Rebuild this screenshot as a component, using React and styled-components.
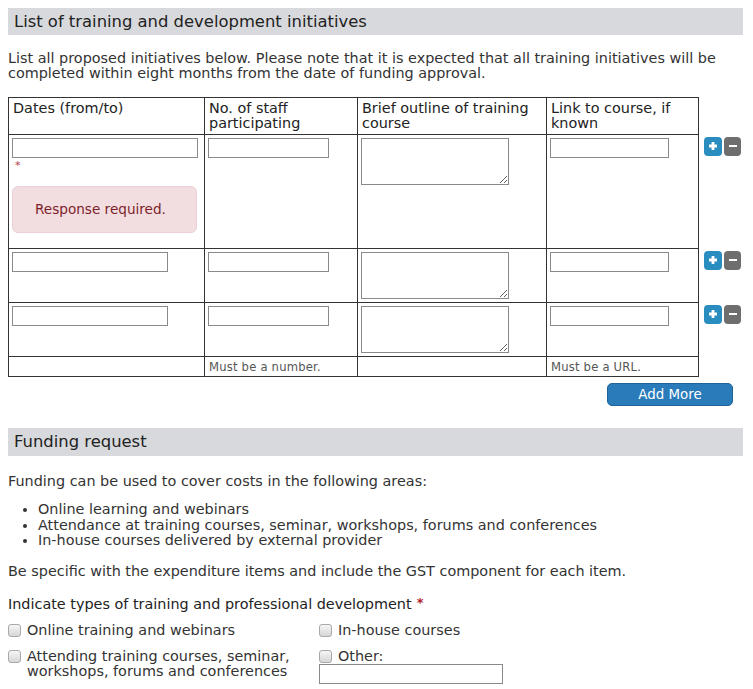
import React from "react";
import styled, { createGlobalStyle } from "styled-components";

const GlobalStyle = createGlobalStyle`
  body {
    margin: 8px;
    background: #ffffff;
    color: #333333;
    font-family: "DejaVu Sans", "Liberation Sans", sans-serif;
    font-size: 14.4px;
    line-height: 15px;
  }
`;

const Page = styled.div`
  width: 735px;
  display: flex;
  flex-direction: column;
`;

const SectionHeader = styled.h2`
  margin: 0;
  height: ${(p) => p.$h}px;
  display: flex;
  align-items: center;
  padding: 0 6px;
  background: #d8d9dc;
  color: #222222;
  font-size: 16.4px;
  font-weight: normal;
  line-height: 20px;
`;

const Para = styled.p`
  margin: ${(p) => p.$mt}px 0 0 0;
  line-height: 15px;
`;

const Table = styled.table`
  margin-top: 16px;
  border-collapse: collapse;
  table-layout: fixed;
  width: 735px;
`;

const HeadCell = styled.th`
  border: 1px solid #333333;
  padding: 3px 4px 3px 4px;
  text-align: left;
  vertical-align: top;
  font-weight: normal;
  color: #222222;
  line-height: 15px;
`;

const Cell = styled.td`
  border: 1px solid #333333;
  padding: 3px 4px 3px 3px;
  vertical-align: top;
`;

const NoteCell = styled.td`
  border: 1px solid #333333;
  padding: 3px 4px 2px 4px;
  font-size: 11.6px;
  line-height: 14px;
  color: #555555;
  letter-spacing: 0.2px;
`;

const SideCell = styled.td`
  border: none;
  padding: 2px 0 0 5px;
  vertical-align: top;
`;

const EmptySide = styled.th`
  border: none;
  padding: 0;
`;

const TextInput = styled.input`
  display: block;
  box-sizing: border-box;
  width: ${(p) => p.$w}px;
  height: 20px;
  margin: 0;
  border: 1px solid #8a8a8a;
  border-radius: 0;
  padding: 0 3px;
  background: #ffffff;
  font: inherit;
`;

const TextArea = styled.textarea`
  display: block;
  box-sizing: border-box;
  width: 148px;
  height: 47px;
  margin: 0;
  border: 1px solid #8a8a8a;
  border-radius: 0;
  padding: 2px;
  font: inherit;
`;

const Required = styled.div`
  height: 15px;
  padding-left: 3px;
  color: #b03a48;
  font-size: 11px;
  line-height: 15px;
`;

const ErrorBox = styled.div`
  box-sizing: border-box;
  width: 185px;
  height: 47px;
  margin: 13px 0 12px 0;
  padding-left: 22px;
  display: flex;
  align-items: center;
  background: #f2dde0;
  border: 1px solid #ecd0d5;
  border-radius: 6px;
  color: #7d1f2b;
  font-size: 13.6px;
`;

const BtnGroup = styled.div`
  display: flex;
  gap: 2px;
`;

const IconBtn = styled.button`
  width: ${(p) => (p.$add ? 18 : 17)}px;
  height: 19px;
  padding: 0;
  border: none;
  border-radius: 4px;
  background: ${(p) => (p.$add ? "#2a8dc0" : "#6e6e6e")};
  display: flex;
  align-items: center;
  justify-content: center;
  cursor: pointer;
`;

const ButtonBar = styled.div`
  display: flex;
  justify-content: flex-end;
  padding: 6px 10px 0 0;
`;

const AddMore = styled.button`
  box-sizing: border-box;
  width: 126px;
  height: 23px;
  border: 1px solid #1f639a;
  border-radius: 5px;
  background: #2a7bba;
  color: #ffffff;
  font-family: "DejaVu Sans", sans-serif;
  font-size: 13.4px;
  padding: 0;
`;

const Section2 = styled.div`
  margin-top: 22px;
  display: flex;
  flex-direction: column;
`;

const List = styled.ul`
  margin: 13px 0 0 0;
  padding-left: 30px;
  line-height: 15.5px;
`;

const Question = styled.div`
  margin-top: 18px;
  color: #222222;
  line-height: 15px;
`;

const Star = styled.span`
  color: #b0202e;
  font-size: 13px;
  font-weight: bold;
  position: relative;
  top: -2px;
  margin-left: 5px;
`;

const OptionsGrid = styled.div`
  margin-top: 11px;
  display: grid;
  grid-template-columns: 311px 1fr;
  row-gap: 11px;
`;

const Option = styled.label`
  display: flex;
  gap: 6px;
  align-items: flex-start;
  line-height: 15px;
`;

const Check = styled.input.attrs({ type: "checkbox" })`
  appearance: none;
  -webkit-appearance: none;
  box-sizing: border-box;
  flex: none;
  width: 13px;
  height: 13px;
  margin: 1px 0 0 0;
  border: 1px solid #a9a9a9;
  border-radius: 3px;
  background: linear-gradient(#f6f6f6, #d6d6d6);
`;

const OtherWrap = styled.div`
  display: flex;
  flex-direction: column;
`;

const PlusIcon = () => (
  <svg width="10" height="10" viewBox="0 0 10 10">
    <path d="M5 1v8M1 5h8" stroke="#fff" strokeWidth="2.8" />
  </svg>
);
const MinusIcon = () => (
  <svg width="10" height="10" viewBox="0 0 10 10">
    <path d="M1 5h8" stroke="#fff" strokeWidth="2" />
  </svg>
);

const Controls = () => (
  <SideCell>
    <BtnGroup>
      <IconBtn $add aria-label="Add row"><PlusIcon /></IconBtn>
      <IconBtn aria-label="Remove row"><MinusIcon /></IconBtn>
    </BtnGroup>
  </SideCell>
);

const rows = [0, 1, 2];

export default function App() {
  return (
    <Page>
      <GlobalStyle />
      <SectionHeader $h={27}>List of training and development initiatives</SectionHeader>
      <Para $mt={16}>
        List all proposed initiatives below. Please note that it is expected that all training initiatives will be completed within eight months from the date of funding approval.
      </Para>
      <Table>
        <colgroup>
          <col style={{ width: 196 }} />
          <col style={{ width: 153 }} />
          <col style={{ width: 189 }} />
          <col style={{ width: 152 }} />
          <col style={{ width: 45 }} />
        </colgroup>
        <thead>
          <tr>
            <HeadCell>Dates (from/to)</HeadCell>
            <HeadCell>No. of staff participating</HeadCell>
            <HeadCell>Brief outline of training course</HeadCell>
            <HeadCell>Link to course, if known</HeadCell>
            <EmptySide />
          </tr>
        </thead>
        <tbody>
          {rows.map((i) => (
            <tr key={i}>
              <Cell>
                <TextInput $w={i === 0 ? 186 : 156} />
                {i === 0 && (
                  <>
                    <Required>*</Required>
                    <ErrorBox>Response required.</ErrorBox>
                  </>
                )}
              </Cell>
              <Cell><TextInput $w={121} /></Cell>
              <Cell><TextArea /></Cell>
              <Cell><TextInput $w={119} /></Cell>
              <Controls />
            </tr>
          ))}
          <tr>
            <NoteCell />
            <NoteCell>Must be a number.</NoteCell>
            <NoteCell />
            <NoteCell>Must be a URL.</NoteCell>
            <SideCell />
          </tr>
        </tbody>
      </Table>
      <ButtonBar>
        <AddMore>Add More</AddMore>
      </ButtonBar>
      <Section2>
        <SectionHeader $h={28}>Funding request</SectionHeader>
        <Para $mt={18}>Funding can be used to cover costs in the following areas:</Para>
        <List>
          <li>Online learning and webinars</li>
          <li>Attendance at training courses, seminar, workshops, forums and conferences</li>
          <li>In-house courses delivered by external provider</li>
        </List>
        <Para $mt={15}>Be specific with the expenditure items and include the GST component for each item.</Para>
        <Question>
          Indicate types of training and professional development<Star>*</Star>
        </Question>
        <OptionsGrid>
          <Option><Check />Online training and webinars</Option>
          <Option><Check />In-house courses</Option>
          <Option><Check />Attending training courses, seminar, workshops, forums and conferences</Option>
          <OtherWrap>
            <Option><Check />Other:</Option>
            <TextInput $w={184} />
          </OtherWrap>
        </OptionsGrid>
      </Section2>
    </Page>
  );
}
